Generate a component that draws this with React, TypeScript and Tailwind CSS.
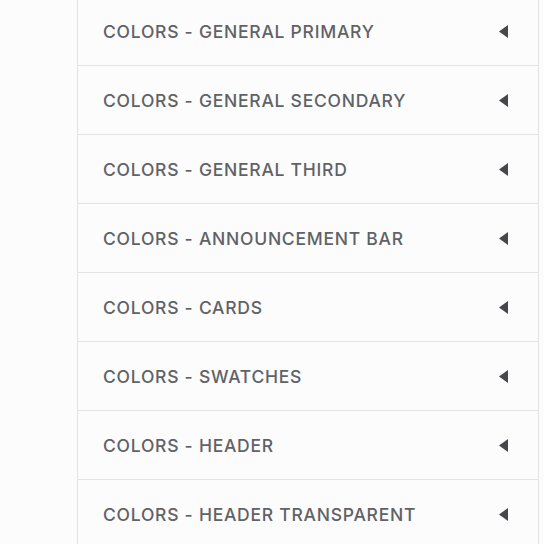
const SECTIONS = [
  'Colors - General primary',
  'Colors - General secondary',
  'Colors - General third',
  'Colors - Announcement bar',
  'Colors - Cards',
  'Colors - Swatches',
  'Colors - Header',
  'Colors - Header transparent',
]

export default function App() {
  return (
    <div className="h-[544px] w-[544px] overflow-hidden bg-[#fcfcfc]">
      <div className="ml-[77px] mt-[-3px] w-[462px] border-x border-[#e3e3e5] bg-[#fcfcfc]">
        {SECTIONS.map((s) => (
          <div
            key={s}
            className="flex h-[69px] items-center justify-between border-b border-[#e3e3e5] pl-[25px] pr-[30px]"
          >
            <span className="mt-[2px] text-[17.5px] font-medium uppercase tracking-[0.75px] text-[#5f6266] [font-family:Inter,'Liberation_Sans',sans-serif]">
              {s}
            </span>
            <svg width="9" height="13" viewBox="0 0 9 13" className="text-[#45474a]">
              <path d="M9 0 L9 13 L0 6.5 Z" fill="currentColor" />
            </svg>
          </div>
        ))}
      </div>
    </div>
  )
}
